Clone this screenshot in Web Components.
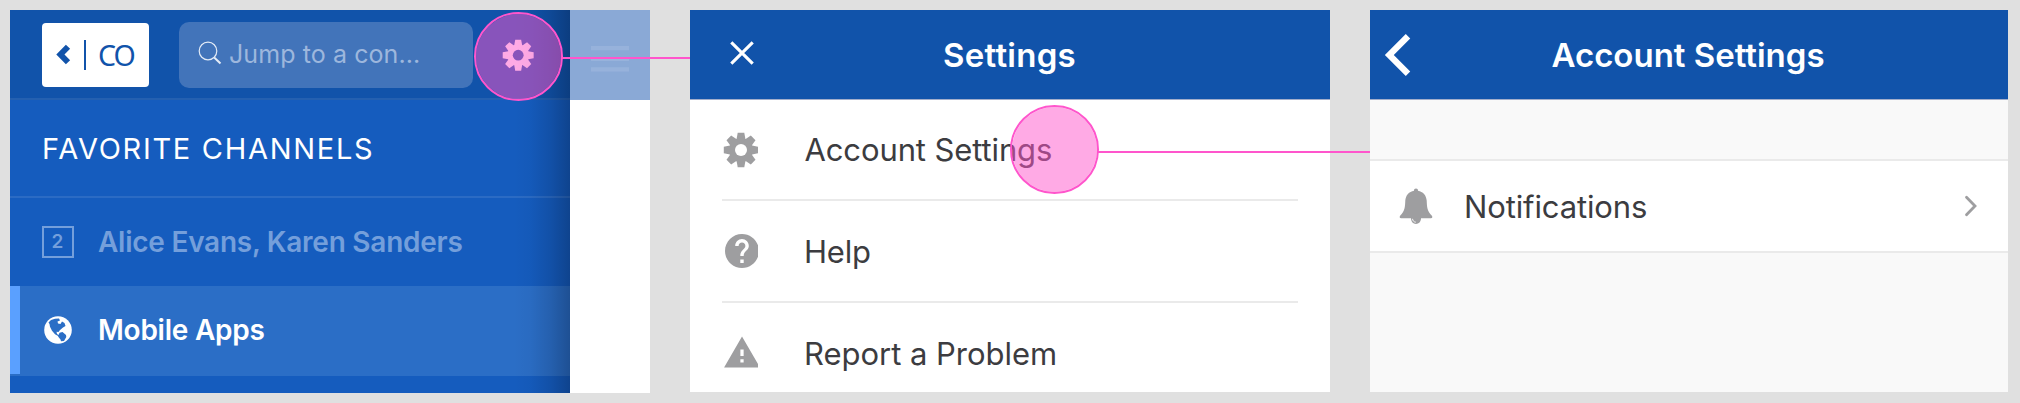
<!DOCTYPE html>
<html lang="en">
<head>
<meta charset="utf-8">
<title>Settings flow</title>
<style>
html,body{margin:0;height:100%;background:#e0e0e0}
body{font-family:Inter,"Liberation Sans",sans-serif;overflow:hidden}
</style>
</head>
<body>
<flow-board></flow-board>
<script>
const define = (name, html, setup) => {
  const t = document.createElement('template');
  t.innerHTML = html;
  customElements.define(name, class extends HTMLElement {
    connectedCallback() {
      if (!this.shadowRoot) this.attachShadow({mode: 'open'}).append(t.content.cloneNode(true));
      if (setup) setup(this, this.shadowRoot);
    }
  });
};

/* Icons, selected by the name attribute */
const gear = (id) => `<svg width="36" height="36" viewBox="-18 -18 36 36"><mask id="${id}"><rect x="-18" y="-18" width="36" height="36" fill="#fff"/><circle r="6" fill="#000"/></mask><g mask="url(#${id})" fill="currentColor"><circle r="12"/>${[0,45,90,135].map(a => `<path transform="rotate(${a})" d="M-3.300-17.200H3.300L4.400-11V11L3.300 17.200H-3.300L-4.400 11V-11Z"/>`).join('')}</g></svg>`;
const ICONS = {
  gear: gear('hole'),
  help: `<svg width="36" height="36" viewBox="0.235 1.41 21.18 21.18"><path fill="currentColor" d="M12 2C6.48 2 2 6.48 2 12s4.48 10 10 10 10-4.48 10-10S17.52 2 12 2zm1 17h-2v-2h2v2zm2.07-7.75l-.9.92C13.45 12.9 13 13.5 13 15h-2v-.5c0-1.1.45-2.1 1.17-2.83l1.24-1.26c.37-.36.59-.86.59-1.41 0-1.1-.9-2-2-2s-2 .9-2 2H8c0-2.21 1.79-4 4-4s4 1.79 4 4c0 .88-.36 1.68-.93 2.25z"/></svg>`,
  warning: `<svg width="36" height="36" viewBox="-0.27 1.1 22.08 22.08"><path fill="currentColor" d="M1 21h22L12 2 1 21zm12-3h-2v-2h2v2zm0-4h-2v-4h2v4z"/></svg>`,
  close: `<svg width="24" height="24" viewBox="0 0 24 24"><path d="M1.3 1.3 22.7 22.7M22.7 1.3 1.3 22.7" stroke="currentColor" stroke-width="3.1"/></svg>`,
  back: `<svg width="27" height="44" viewBox="0 0 27 44"><path d="M24 3.300 5.300 22 24 40.700" fill="none" stroke="currentColor" stroke-width="6.300"/></svg>`,
  'back-small': `<svg width="15" height="22" viewBox="0 0 15 22"><path d="M12 2.7 4.400 10.500 12 18.300" fill="none" stroke="currentColor" stroke-width="5.900"/></svg>`,
  next: `<svg width="14" height="22" viewBox="0 0 14 22"><path d="M2.5 2.2 11 11l-8.500 8.800" fill="none" stroke="currentColor" stroke-width="2.8" stroke-linecap="round"/></svg>`,
  search: `<svg width="24" height="24" viewBox="0 0 24 24"><circle cx="10" cy="10" r="8.800" fill="none" stroke="currentColor" stroke-width="1.2"/><path d="M16.200 16.500 22.500 22.500" stroke="currentColor" stroke-width="2"/></svg>`,
  menu: `<svg width="38" height="26" viewBox="0 0 38 26"><path d="M0 2.200H38M0 13H38M0 23.400H38" stroke="currentColor" stroke-width="4.200"/></svg>`,
  bell: `<svg width="34" height="37" viewBox="0 0 34 37"><path fill="currentColor" d="M17 .5c1.300 0 2 .9 2 2.200 5 .9 8.300 4.500 8.700 9.800.3 6.500.3 10.500 5.200 15.300.9 1.300.4 2.500-1 2.500H22c0 3.500-2.200 5.700-5 5.700s-5-2.200-5-5.700H2.100c-1.400 0-1.900-1.200-1-2.500C6 23 6 19 6.300 12.500 6.700 7.200 10 3.600 15 2.700 15 1.400 15.700.5 17 .5z"/><path d="M13.500 30.800c.2 1.900 1.400 3.200 3.300 3.400" fill="none" stroke="#fff" stroke-width=".9"/></svg>`,
  globe: `<svg width="28" height="28" viewBox="0 0 28 28"><circle cx="14" cy="14" r="13.800" fill="#fff"/><path fill="#2b6ec6" d="M4.500 6.500 7 4l4-1.200 4-.3 1 2-2.500 1 .5 2 2.500.5 1.500-2.500 2.500 1.500 1 3-2.500 1.500-3 2.500-1.500 2-2-.3.5 2.300 2.500 1.500-1 .8-3.500-2-3-3.500-2-4-.5-2.800zM15.500 16.800l3-.8 3.500 3 .3 2-2.300 4-3 .2-.5-1.700-2.500-3z"/></svg>`
};
define('ui-icon', `<style>:host{display:block;flex:none}svg{display:block}</style>`, (el, root) => {
  const box = document.createElement('div');
  box.innerHTML = ICONS[el.getAttribute('name')];
  root.append(box);
});

/* One line of text, tracked so that its ink spans the given width */
define('text-line', `<style>:host{display:block;flex:none;white-space:pre;line-height:40px}</style><slot></slot>`, (el) => {
  const s = el.textContent, size = el.getAttribute('size'), weight = el.getAttribute('weight') || 400;
  const family = el.getAttribute('family') || 'Inter';
  const c = document.createElement('canvas').getContext('2d');
  c.font = `${weight} ${size}px "${family}"`;
  const m = c.measureText(s);
  el.style.font = `${weight} ${size}px/40px "${family}", sans-serif`;
  if (s.length > 1) el.style.letterSpacing = ((el.getAttribute('span') - m.actualBoundingBoxLeft - m.actualBoundingBoxRight) / (s.length - 1)).toFixed(3) + 'px';
  el.style.marginLeft = (m.actualBoundingBoxLeft + Number(el.getAttribute('nudge') || 0)).toFixed(2) + 'px';
});

define('nav-bar', `<style>
:host{display:flex;position:relative;box-sizing:border-box;height:90px;align-items:center;justify-content:center;background:#1153aa;border-bottom:1px solid #a3aecb;color:#fff}
.lead{position:absolute;left:var(--lead-x);top:var(--lead-y)}
</style><div class="lead"><slot name="lead"></slot></div><slot></slot>`);

define('menu-row', `<style>
:host{display:flex;align-items:center;height:100px;margin:0 32px;color:#3c3c40;border-bottom:2px solid #eaeaea}
:host([last]){border:0}
.icon{width:36px;margin-right:48px;color:#9e9ea0;overflow:hidden}
.label{padding-top:1px}
</style><div class="icon"><slot name="icon"></slot></div><div class="label"><slot></slot></div>`);

define('team-chip', `<style>
:host{display:flex;box-sizing:border-box;width:107px;height:64px;border-radius:4px;background:#fff;color:#1153aa;align-items:center;padding-left:14px}
i{width:2px;height:30px;background:#1153aa;margin:0 13px 0 13px}
</style><ui-icon name="back-small"></ui-icon><i></i><text-line size="28.500" span="35.500" family="Noto Sans">CO</text-line>`);

define('search-field', `<style>
:host{display:flex;box-sizing:border-box;width:294px;height:66px;border-radius:10px;background:#4274ba;color:#9db7dd;padding:0 0 2px 19px;align-items:center}
ui-icon{color:#e4ecf7;margin:-2px 8px 0 0}
</style><ui-icon name="search"></ui-icon><text-line size="25" span="189">Jump to a con...</text-line>`);

define('channel-row', `<style>
:host{display:flex;align-items:center;height:88px;box-sizing:border-box;padding-left:32px;color:#749fdb}
.icon{width:32px;display:flex;justify-content:center;margin-right:25px}
:host([selected]){background:#2b6ec6;color:#fff;height:90px;border-bottom:2px solid #2b6ec6;padding-left:0}
.bar{display:none}
:host([selected]) .bar{display:block;width:10px;height:88px;background:#5aa0ff;margin-right:22px}
</style><div class="bar"></div><div class="icon"><slot name="icon"></slot></div><slot></slot>`);

define('count-badge', `<style>
:host{display:flex;box-sizing:border-box;width:32px;height:32px;border:2px solid #749fdb;justify-content:center;align-items:center}
</style><slot></slot>`);

define('side-drawer', `<style>
:host{display:block;position:relative;width:560px;height:383px;background:#155cbe;overflow:hidden}
header{display:flex;box-sizing:border-box;height:90px;padding-left:32px;background:#1153aa;border-bottom:2px solid #2460b0;align-items:center}
search-field{margin-left:30px}
.gear{margin-left:29px;color:#fff}
.gear ui-icon{zoom:.9}
header>*{position:relative;top:1px}
h2{display:flex;box-sizing:border-box;align-items:center;margin:0;height:98px;padding:2px 0 0 34px;border-bottom:2px solid #2b6bc4;color:#fff}
.shade{position:absolute;right:0;top:0;width:56px;height:100%;background:linear-gradient(90deg,rgba(0,10,30,0),rgba(0,10,30,.03) 30%,rgba(0,10,30,.14) 65%,rgba(0,10,30,.3))}
</style>
<header><team-chip></team-chip><search-field></search-field><div class="gear"><ui-icon name="gear"></ui-icon></div></header>
<h2><text-line size="29" span="327">FAVORITE CHANNELS</text-line></h2>
<channel-row><count-badge slot="icon"><text-line size="19" weight="600">2</text-line></count-badge><text-line size="28" weight="600" span="365" nudge="-1">Alice Evans, Karen Sanders</text-line></channel-row>
<channel-row selected><ui-icon slot="icon" name="globe"></ui-icon><text-line size="28" weight="600" span="164.500" nudge="1">Mobile Apps</text-line></channel-row>
<div class="shade"></div>`);

define('drawer-screen', `<style>
:host{display:flex;width:640px;height:383px;background:#fff}
.peek{flex:1;height:90px;background:#8aa9d6;color:#97b2db;display:flex;align-items:center;justify-content:center}
ui-icon{margin:7px 0 0 -1px}
</style><side-drawer></side-drawer><div class="peek"><ui-icon name="menu"></ui-icon></div>`);

define('settings-screen', `<style>
:host{display:block;width:640px;height:382px;background:#fff;overflow:hidden}
nav-bar{--lead-x:40px;--lead-y:31px}
menu-row:first-of-type{height:99px}
.g{margin-left:.5px}
</style>
<nav-bar><ui-icon slot="lead" name="close"></ui-icon><text-line size="33" weight="600" span="130.500">Settings</text-line></nav-bar>
<menu-row><ui-icon slot="icon" class="g" name="gear"></ui-icon><text-line size="31" span="246.500" nudge="-1.500">Account Settings</text-line></menu-row>
<menu-row><ui-icon slot="icon" name="help"></ui-icon><text-line size="31" span="64">Help</text-line></menu-row>
<menu-row last><ui-icon slot="icon" name="warning"></ui-icon><text-line size="31" span="249">Report a Problem</text-line></menu-row>`);

define('account-screen', `<style>
:host{display:block;width:638px;height:382px;background:#f9f9f9}
nav-bar{--lead-x:14px;--lead-y:23px}
.row{display:flex;align-items:center;height:90px;margin-top:59px;background:#fff;border:solid #eaeaea;border-width:2px 0;padding:0 30px 0 29px;color:#3c3c40}
.row ui-icon{color:#9e9ea0}
.label{flex:1;padding:2px 0 0 33px}
</style>
<nav-bar><ui-icon slot="lead" name="back"></ui-icon><text-line size="33" weight="600" span="272" nudge="-2">Account Settings</text-line></nav-bar>
<div class="row"><ui-icon name="bell"></ui-icon><div class="label"><text-line size="31" span="180">Notifications</text-line></div><ui-icon name="next"></ui-icon></div>`);

/* Tap target with the connector that leads to the next screen */
define('tap-spot', `<style>
:host{position:absolute;display:flex;align-items:center}
.dot{box-sizing:border-box;width:89px;height:89px;border:2px solid #ff55cc;border-radius:50%;background:rgba(255,85,204,.5);background-clip:padding-box}
.line{height:2px;background:#ff55cc;width:var(--run);margin:var(--drop) 0 0 -1px}
</style><div class="dot"></div><div class="line"></div>`);

define('flow-board', `<style>
:host{display:flex;position:relative;gap:40px;padding:10px;width:2000px;height:383px;background:#e0e0e0;align-items:flex-start}
.a{left:474px;top:12px;--run:128px;--drop:3px}
.b{left:1010px;top:105px;--run:272px;--drop:5px}
</style><drawer-screen></drawer-screen><settings-screen></settings-screen><account-screen></account-screen><tap-spot class="a"></tap-spot><tap-spot class="b"></tap-spot>`);
</script>
</body>
</html>
